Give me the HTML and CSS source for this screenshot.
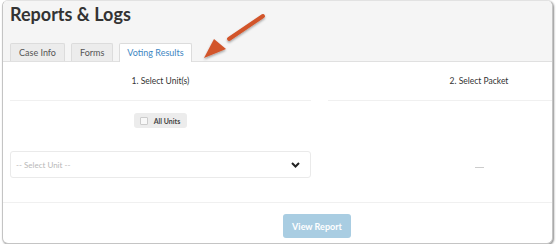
FILE: index.html
```html
<!DOCTYPE html>
<html lang="en">
<head>
  <meta charset="UTF-8" />
  <title>Reports &amp; Logs</title>
  <link rel="stylesheet" href="styles.css">
</head>
<body>
  <div class="window">
    <header class="page-head">
      <h1>Reports &amp; Logs</h1>
      <nav class="tabs">
        <span class="tab">Case Info</span>
        <span class="tab">Forms</span>
        <span class="tab active">Voting Results</span>
      </nav>
    </header>

    <section class="report">
      <div class="columns">
        <div class="col">
          <h2>1. Select Unit(s)</h2>
          <div class="col-body">
            <label class="all-units"><span class="box"></span>All Units</label>
            <div class="select">
              <span class="placeholder">-- Select Unit --</span>
              <svg class="chevron" width="9" height="6" viewBox="0 0 9 6"><path d="M1 1 L4.5 4.5 L8 1" fill="none" stroke="#222" stroke-width="2"/></svg>
            </div>
          </div>
        </div>
        <div class="col">
          <h2>2. Select Packet</h2>
          <div class="col-body packet">
            <span class="dash"></span>
          </div>
        </div>
      </div>
      <div class="actions">
        <button class="view-report">View Report</button>
      </div>
    </section>

    <svg class="arrow" width="80" height="60" viewBox="0 0 80 60">
      <defs>
        <filter id="shadow" x="-20%" y="-20%" width="140%" height="140%">
          <feDropShadow dx="0" dy="1.5" stdDeviation="1.2" flood-color="#000" flood-opacity="0.35"/>
        </filter>
      </defs>
      <g filter="url(#shadow)" fill="#d2542b">
        <path d="M62 10 L28 33" stroke="#d2542b" stroke-width="4" stroke-linecap="round"/>
        <path d="M3 52 L13 33 L25 43 Z"/>
      </g>
    </svg>
  </div>
</body>
</html>
```

FILE: styles.css
```css
body {
  margin: 0;
  background: #fff;
  font-family: 'Lato', sans-serif;
  color: #333;
}
.window {
  position: relative;
  width: 549px;
  height: 242px;
  margin-left: 2px;
  border: 1px solid #c4c4c4;
  border-top-color: #e2e2e2;
  border-radius: 6px;
  box-shadow: 1px 1px 2px rgba(0,0,0,0.45);
  overflow: hidden;
  background: #fff;
}
.page-head {
  background: #f5f5f5;
  border-bottom: 1px solid #e0e0e0;
  padding: 2px 0 0 7px;
  height: 58px;
}
h1 {
  margin: 0;
  font-size: 18px;
  line-height: 22px;
  font-weight: 700;
  color: #333;
}
.tabs {
  display: flex;
  gap: 6px;
  margin-top: 18px;
}
.tab {
  height: 17px;
  line-height: 17px;
  padding: 0 8px;
  font-size: 9px;
  color: #555;
  background: #ececec;
  border: 1px solid #dcdcdc;
  border-bottom: none;
  border-radius: 2px 2px 0 0;
}
.tab.active {
  background: #fff;
  color: #3d86c2;
  height: 18px;
  padding: 0 7px;
}
.report {
  width: 627px;
}
.columns {
  display: grid;
  grid-template-columns: 301px 302px;
  gap: 17px;
  padding: 0 0 0 7px;
  border-bottom: 1px solid #f0f0f0;
}
h2 {
  margin: 0;
  height: 38px;
  line-height: 38px;
  text-align: center;
  font-size: 8.5px;
  font-weight: 400;
  color: #333;
  border-bottom: 1px solid #f0f0f0;
}
.col-body {
  display: flex;
  flex-direction: column;
  align-items: center;
  padding: 12px 0 24px;
}
.all-units {
  display: flex;
  align-items: center;
  gap: 6px;
  height: 15px;
  padding: 0 7px 0 6px;
  background: #ececec;
  border-radius: 3px;
  font-size: 7px;
  font-weight: 700;
  color: #444;
}
.box {
  width: 6px;
  height: 6px;
  border: 1px solid #ccc;
  border-radius: 1px;
  background: #f8f8f8;
}
.select {
  align-self: stretch;
  display: flex;
  align-items: center;
  justify-content: space-between;
  margin-top: 23px;
  height: 25px;
  padding: 0 10px 0 5px;
  border: 1px solid #eaeaea;
  border-radius: 3px;
}
.placeholder {
  font-size: 8px;
  color: #b8b8b8;
}
.packet {
  padding-top: 66px;
}
.dash {
  width: 9px;
  height: 1px;
  background: #ccc;
}
.actions {
  display: flex;
  justify-content: center;
  padding: 11px 6px 0 7px;
}
.view-report {
  width: 68px;
  height: 24px;
  border: none;
  border-radius: 3px;
  background: #a9cde2;
  color: #fff;
  font-family: 'Lato', sans-serif;
  font-size: 9px;
  font-weight: 700;
}
.arrow {
  position: absolute;
  left: 198px;
  top: 5px;
}
```
